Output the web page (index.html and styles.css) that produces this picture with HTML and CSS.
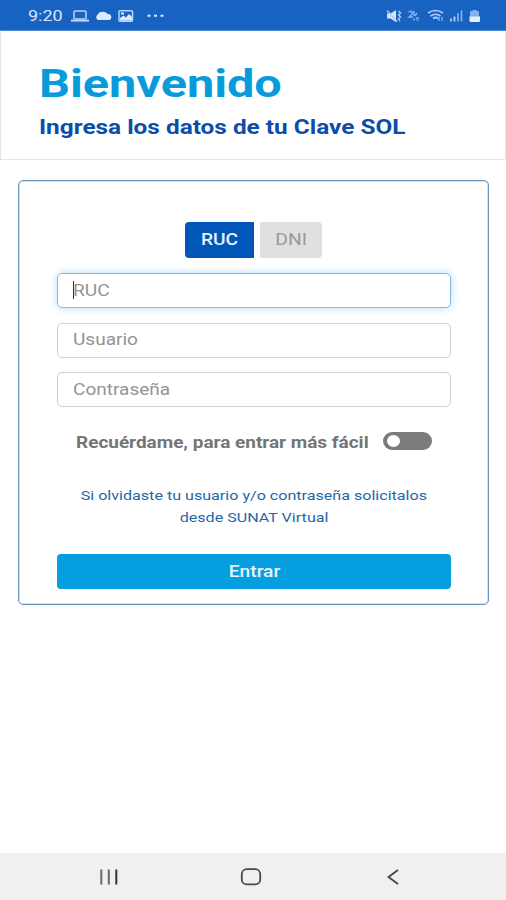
FILE: index.html
```html
<!DOCTYPE html>
<html lang="es">
<head>
<meta charset="utf-8">
<title>Clave SOL</title>
<link rel="stylesheet" href="styles.css">
</head>
<body>
<div class="screen">
  <div class="status">
    <span class="time wide">9:20</span>
    <svg class="status-left" width="96" height="16" viewBox="0 0 96 16" fill="none" stroke="#b9d5f8" stroke-width="1.5">
      <rect x="4" y="3" width="12" height="8" rx="1"/><path d="M1 12.600h18" stroke-width="2"/>
      <path fill="#dcebff" stroke="none" d="M28 12a3 3 0 0 1-.5-5.200 5.500 4.500 0 0 1 10-.7 3 3 0 0 1 1.500 5.900z"/>
      <rect x="49" y="2.800" width="13.500" height="10.400" rx="1"/><path fill="#dcebff" stroke="none" d="M50 12.500V10l3.500-2.500 2.500 2 3-3.500 3 3v3.500zM51 4.500h3v2h-3z"/>
      <path fill="#dcebff" stroke="none" d="M77.500 6.800h3v2h-3zm6.500 0h3v2h-3zm6.500 0h3v2h-3z"/>
    </svg>
    <svg class="status-right" width="96" height="16" viewBox="0 0 96 16" fill="none" stroke="#b0cff7" stroke-width="1.400">
      <path fill="#d5e6fc" stroke="none" d="M1 5.500h3.500L10 2v12l-5.500-3.500H1z"/><path d="M1 2.500l10 11M12.500 3l2 2-2 2 2 2-2 2 1.500 2"/>
      <path d="M22.500 4.500q3-2.500 4 0 0 2-3.500 4.500h4M28 3v5M31 5l-2 3M27 11.500h2M30 9.500l3 3m0-3l-3 3" stroke="#83b1ee" stroke-width="1.400"/>
      <path d="M42 5q7.500-5 15 0M44.500 8q5-3.500 10 0M47 10.500q2.500-2 5 0" stroke-width="1.700"/><path d="M53 9v4m3-4v4" stroke-width="1"/>
      <path d="M65 13.500v-3M68.500 13.500V8.500" stroke-width="1.800"/><path d="M72 13.500V5M75.500 13.500V2.500" stroke="#8db8ef" stroke-width="1.500"/>
      <path fill="#83b1ee" stroke="none" d="M84 4q0-1 1-1h1.500V2h4v1H92q1 0 1 1v5h-9z"/><path fill="#e3efff" stroke="none" d="M83.500 8.500h10.500V13q0 1-1 1h-8.500q-1 0-1-1z"/>
    </svg>
  </div>
  <header class="header">
    <h1 class="title"><span class="wide">Bienvenido</span></h1>
    <p class="subtitle"><span class="wide">Ingresa los datos de tu Clave SOL</span></p>
  </header>
  <main class="card">
    <div class="tabs">
      <button class="tab active"><span class="wide">RUC</span></button>
      <button class="tab"><span class="wide">DNI</span></button>
    </div>
    <div class="field focus"><i class="caret"></i><span class="wide">RUC</span></div>
    <div class="field"><span class="wide">Usuario</span></div>
    <div class="field"><span class="wide">Contraseña</span></div>
    <div class="remember">
      <span class="wide">Recuérdame, para entrar más fácil</span>
      <span class="toggle"><i class="knob"></i></span>
    </div>
    <p class="forgot"><span class="wide">Si olvidaste tu usuario y/o contraseña solicitalos</span><span class="wide">desde SUNAT Virtual</span></p>
    <button class="submit"><span class="wide">Entrar</span></button>
  </main>
  <nav class="nav">
    <svg width="22" height="20" viewBox="0 0 22 20" fill="none" stroke="#666" stroke-width="2"><path d="M3.300 2.500v15M10.800 2.500v15"/><path d="M18.300 2.500v15" stroke="#333"/></svg>
    <svg width="22" height="20" viewBox="0 0 22 20" fill="none" stroke="#484848" stroke-width="1.800"><rect x="1.800" y="2.200" width="18.400" height="15.200" rx="5"/></svg>
    <svg width="22" height="20" viewBox="0 0 22 20" fill="none" stroke="#444" stroke-width="1.800"><path d="M16 3L6.500 10l9.500 7"/></svg>
  </nav>
</div>
</body>
</html>
```
FILE: styles.css
```css
* { box-sizing: border-box; }
body { margin: 0; background: #fff; font-family: Roboto, sans-serif; }
h1, p { margin: 0; }
button { border: 0; padding: 0; font-family: inherit; }
.screen { height: 900px; display: flex; flex-direction: column; }
.wide { display: inline-block; white-space: nowrap; transform: scaleX(1.2); transform-origin: center; }
.status { height: 31px; flex: none; display: flex; align-items: center; background: #1863c1; border-bottom: 1px solid #4f8bd3; padding: 1px 24px 0 28px; }
.time { width: 42px; font-size: 15px; line-height: 30px; color: #d6e7ff; transform-origin: left; }
.status-right { margin-left: auto; }
.header { height: 129px; flex: none; padding: 30px 0 0 38px; border: 1px solid #e6e6e6; border-top: 0; }
.header .wide, .field .wide, .remember .wide { transform-origin: left; }
.title { font-size: 39px; line-height: 46px; font-weight: 700; color: #089bdc; }
.title .wide { transform: scaleX(1.246); }
.subtitle { margin-top: 8px; font-size: 20px; line-height: 24px; font-weight: 700; color: #0b4da8; }
.subtitle .wide { transform: scaleX(1.218); }
.card { margin: 20px 17px 0 18px; height: 425px; flex: none; border: 1px solid #6b96bb; box-shadow: inset 0 0 0 1px #d3e2ee; border-radius: 5px; padding: 41px 37px 0 38px; display: flex; flex-direction: column; }
.tabs { display: flex; gap: 6px; margin-left: 128px; height: 36px; margin-bottom: 15px; }
.tab { width: 62px; background: #e0e0e0; color: #999; font-size: 16px; line-height: 34px; border-radius: 2px 4px 4px 2px; }
.tab.active { width: 69px; background: #0057b7; color: #e6f1ff; font-weight: 500; border-radius: 4px 0 0 4px; }
.field { height: 35px; flex: none; display: flex; align-items: center; border: 1px solid #d0d0d0; border-radius: 5px; padding: 0 0 1px 15px; margin-bottom: 14.500px; font-size: 16px; color: #949494; }
.field.focus { border-color: #7fbae3; box-shadow: 0 0 8px #b4dcf8; }
.field:not(.focus) .wide { transform: scaleX(1.19); }
.caret { width: 1px; height: 18px; margin-right: -1px; background: #333; }
.remember { display: flex; justify-content: space-between; align-items: center; height: 20px; margin-top: 9px; padding: 0 19px; font-size: 16px; font-weight: 700; color: #757575; }
.remember .wide { transform: scaleX(1.185); padding-top: 4px; }
.toggle { width: 49px; height: 18px; padding: 3px 4px; border-radius: 9px; background: #7b7b7b; }
.knob { display: block; width: 13px; height: 12px; border-radius: 50%; background: #fff; }
.forgot { display: flex; flex-direction: column; align-items: center; margin-top: 34px; height: 44px; font-size: 13px; line-height: 22px; color: #2467a8; }
.forgot .wide { transform: scaleX(1.238); }
.submit { height: 35px; margin-top: 25px; border-radius: 4px; background: #059edf; color: #e6f6ff; font-size: 16px; font-weight: 500; }
.nav { margin-top: auto; height: 47px; background: #f0f0f0; display: flex; justify-content: space-between; align-items: center; padding: 1px 102px 0 98px; }
```
